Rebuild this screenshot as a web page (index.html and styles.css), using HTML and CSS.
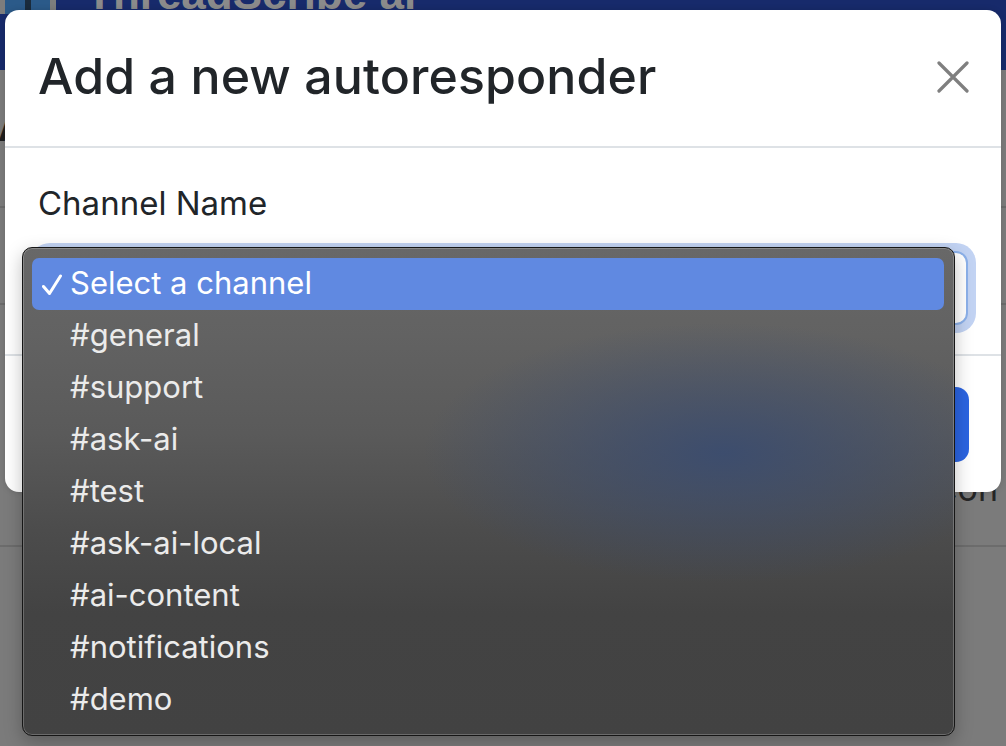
FILE: index.html
```html
<!DOCTYPE html>
<html lang="en">
<head>
<meta charset="utf-8">
<title>Add a new autoresponder</title>
<link rel="stylesheet" href="styles.css">
</head>
<body>
  <div class="page">
    <header class="navbar">
      <div class="brand">
        <span class="logo"><span class="logo-mark"></span></span>
        <span class="brand-name">ThreadScribe ai</span>
      </div>
    </header>
    <main class="content">
      <section class="row row-title"><h1 class="page-title">Autoresponders</h1></section>
      <section class="row row-a"></section>
      <section class="row row-b"><span class="cell-end">Icon</span></section>
      <section class="row row-c"></section>
    </main>
  </div>

  <div class="modal">
    <div class="modal-header">
      <h2 class="modal-title">Add a new autoresponder</h2>
      <button class="close" aria-label="Close">
        <svg width="32" height="32" viewBox="0 0 32 32"><path d="M2 2 L30 30 M30 2 L2 30" stroke="#7f7f7f" stroke-width="3.2" stroke-linecap="round" fill="none"/></svg>
      </button>
    </div>
    <div class="modal-body">
      <label class="field-label">Channel Name</label>
      <div class="select-box"></div>
    </div>
    <div class="modal-footer">
      <button class="btn-primary">Add</button>
    </div>
  </div>

  <div class="menu">
    <div class="menu-item selected"><span class="check"><svg width="20" height="22" viewBox="0 0 20 22"><path d="M1.5 12.5 L7.5 19.5 L18.5 2" stroke="#ffffff" stroke-width="3" stroke-linecap="round" stroke-linejoin="round" fill="none"/></svg></span>Select a channel</div>
    <div class="menu-item"><span class="check"></span>#general</div>
    <div class="menu-item"><span class="check"></span>#support</div>
    <div class="menu-item"><span class="check"></span>#ask-ai</div>
    <div class="menu-item"><span class="check"></span>#test</div>
    <div class="menu-item"><span class="check"></span>#ask-ai-local</div>
    <div class="menu-item"><span class="check"></span>#ai-content</div>
    <div class="menu-item"><span class="check"></span>#notifications</div>
    <div class="menu-item"><span class="check"></span>#demo</div>
  </div>
</body>
</html>
```

FILE: styles.css
```css
* { box-sizing: border-box; }
html, body { margin: 0; padding: 0; }
body {
  width: 1006px;
  height: 746px;
  overflow: hidden;
  background: #7b7b7b;
  font-family: "Inter", "Liberation Sans", sans-serif;
  position: relative;
}

/* backdrop page (dimmed) */
.navbar {
  height: 70px;
  background: #172a6b;
  display: flex;
  align-items: flex-start;
}
.brand {
  display: flex;
  align-items: flex-start;
  gap: 30px;
}
.logo {
  width: 56px;
  height: 40px;
  margin-top: -26px;
  background: #2b5a89;
  border-left: 5px solid #7d7d7d;
  border-right: 6px solid #7d7d7d;
  display: flex;
  justify-content: center;
}
.logo-mark {
  width: 6px;
  height: 100%;
  background: #1a2b3c;
}
.brand-name {
  margin-top: -28px;
  font-family: "Liberation Sans", sans-serif;
  font-weight: 700;
  font-size: 44px;
  line-height: 1;
  color: #8b8b8b;
}
.content { display: flex; flex-direction: column; }
.row { border-bottom: 2px solid #6c6c6c; }
.row-title { height: 138px; padding-top: 38px; }
.page-title {
  margin: 0 0 0 -2px;
  font-size: 36px;
  font-weight: 700;
  color: #1e1e1e;
  line-height: 40px;
}
.row-a { height: 97px; }
.row-b {
  height: 242px;
  display: flex;
  justify-content: flex-end;
  align-items: flex-end;
  padding: 0 8px 36px 0;
}
.cell-end { font-size: 34px; color: #262626; line-height: 40px; }
.row-c { flex: 1; border-bottom: none; }

/* modal */
.modal {
  position: absolute;
  left: 5px;
  top: 10px;
  width: 996px;
  height: 482px;
  background: #fff;
  border-radius: 14px;
  display: flex;
  flex-direction: column;
  box-shadow: 0 0 6px rgba(0,0,0,0.15);
}
.modal-header {
  height: 138px;
  padding: 0 32px 4px 33px;
  display: flex;
  align-items: center;
  justify-content: space-between;
  border-bottom: 2px solid #dee2e6;
}
.modal-title {
  margin: 0;
  font-size: 50px;
  font-weight: 500;
  color: #212529;
  letter-spacing: 0.1px;
  line-height: 1;
}
.close {
  border: 0;
  background: none;
  padding: 0;
  width: 32px;
  height: 32px;
  display: flex;
  margin-top: 2px;
}
.modal-body {
  height: 206px;
  padding: 35px 33px 0;
  display: flex;
  flex-direction: column;
}
.field-label {
  font-size: 33px;
  color: #212529;
  line-height: 40px;
  margin-bottom: 28px;
}
.select-box {
  height: 74px;
  border: 2px solid #8cb1ea;
  border-radius: 12px;
  background: #fff;
  box-shadow: 0 0 0 8px #c2d3f3;
}
.modal-footer {
  flex: 1;
  border-top: 2px solid #dee2e6;
  display: flex;
  justify-content: flex-end;
  align-items: flex-start;
  padding: 31px 32px 0;
}
.btn-primary {
  width: 180px;
  height: 75px;
  border: 0;
  border-radius: 13px;
  background: #2b64e1;
  color: #fff;
  font-size: 32px;
  font-family: inherit;
}

/* native select popup */
.menu {
  position: absolute;
  left: 22px;
  top: 247px;
  width: 933px;
  height: 489px;
  padding: 10px 10px 0 9px;
  border: 1px solid #161616;
  border-radius: 10px;
  background:
    radial-gradient(ellipse 300px 130px at 700px 205px, rgba(58, 76, 112, 0.9), rgba(58, 76, 112, 0) 100%),
    linear-gradient(to bottom, #686868 0%, #626262 18%, #5a5a5a 38%, #4c4c4c 58%, #434343 75%, #424242 100%);
  box-shadow: inset 0 0 0 1px rgba(255,255,255,0.22), 0 6px 18px rgba(0,0,0,0.25);
  display: flex;
  flex-direction: column;
}
.menu-item {
  height: 52px;
  display: flex;
  align-items: center;
  padding-left: 10px;
  padding-bottom: 3px;
  font-family: "Inter", "Liberation Sans", sans-serif;
  font-size: 31px;
  color: #ebebeb;
  border-radius: 7px;
}
.menu-item.selected {
  background: #6089e1;
  color: #ffffff;
}
.check {
  width: 28px;
  display: inline-flex;
  align-items: center;
  justify-content: flex-start;
  padding-top: 5px;
}
```
